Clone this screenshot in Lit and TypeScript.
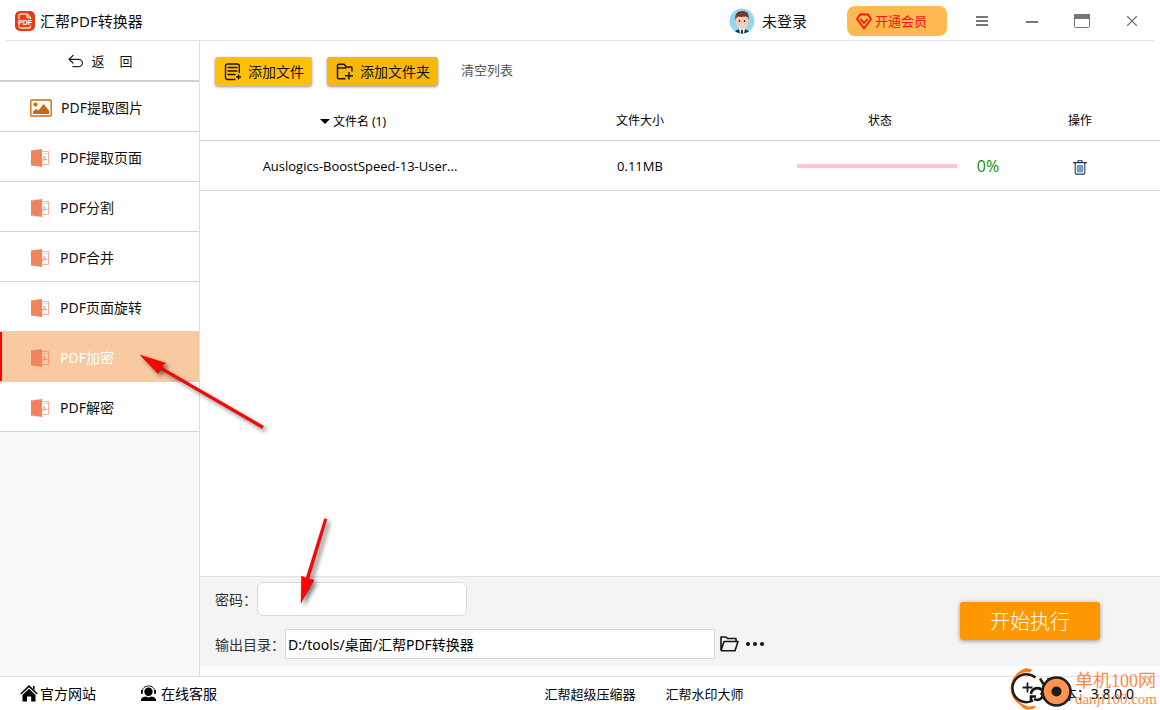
import { LitElement, html, css, svg } from "lit";
import { customElement, state } from "lit/decorators.js";
import { classMap } from "lit/directives/class-map.js";

const FEATURES = ["PDF提取图片", "PDF提取页面", "PDF分割", "PDF合并", "PDF页面旋转", "PDF加密", "PDF解密"];

const logo = html`<svg width="20" height="20" viewBox="0 0 20 20" aria-hidden="true">
  <rect width="20" height="20" rx="5" fill="#e63c10" />
  <path d="M4 8V4.500A1.500 1.500 0 0 1 5.500 3H12L15.500 6.500V8M12 3V6.500H15.500M4 14v1.500A1.500 1.500 0 0 0 5.500 17h8.500a1.500 1.500 0 0 0 1.500-1.500V14" fill="none" stroke="#ffd9c8" stroke-width="1.300" />
  <path d="M2.500 8h15v6.500h-15z" fill="#f04a1c" />
  <text x="10" y="13.800" text-anchor="middle" font-size="7" font-weight="700" fill="#fff" font-family="Liberation Sans, sans-serif">PDF</text>
</svg>`;

const avatar = html`<svg width="26" height="26" viewBox="0 0 26 26" aria-hidden="true">
  <defs><clipPath id="face"><circle cx="13" cy="13" r="12.500" /></clipPath></defs>
  <g clip-path="url(#face)">
    <rect width="26" height="26" fill="#8fd8fb" />
    <path d="M5 26c.5-3.500 2.500-4.500 8-5 5.500.5 7.500 1.500 8 5z" fill="#17324f" />
    <path d="M10 20h6l-1 6h-4z" fill="#fff" />
    <path d="M12.300 21.500h1.400l.6 4.500h-2.600z" fill="#17324f" />
    <circle cx="6.700" cy="13.500" r="1.600" fill="#f4b795" />
    <circle cx="19.300" cy="13.500" r="1.600" fill="#f4b795" />
    <path d="M7 9c0-4 12-4 12 0v5c0 4-3 6.500-6 6.500S7 18 7 14z" fill="#fcceb0" />
    <path d="M6.500 12C5.500 6 8 3 13.500 3 19 3 20.500 7 19.500 12 19 9.500 18 8.500 16.500 8.500c-2.500.5-6 .5-7.500 0C7.500 9.500 7 10.500 6.500 12z" fill="#6d3b2c" />
    <circle cx="10.400" cy="13" r=".9" fill="#4a2b22" />
    <circle cx="15.600" cy="13" r=".9" fill="#4a2b22" />
    <path d="M10.300 16.200h5.400c-.6 2.200-4.800 2.200-5.400 0z" fill="#fff" stroke="#d98a6c" stroke-width=".4" />
  </g>
</svg>`;

const diamond = html`<svg width="16" height="17" viewBox="0 0 16 17" fill="none" stroke="#ff1010" stroke-width="1.800" stroke-linejoin="round" aria-hidden="true">
  <path d="M4 1.500h8l3 4.500-7 9.500L1 6z" /><path d="M4.800 6.500 8 10l3.200-3.500" stroke-linecap="round" />
</svg>`;

const backArrow = html`<svg width="16" height="14" viewBox="0 0 16 14" fill="none" stroke="#222" stroke-width="1.200" aria-hidden="true">
  <path d="M5.500 1 1 5.300l4.500 4.200M1.200 5.300H10.500a4 3.700 0 0 1 0 7.400H4.500" />
</svg>`;

const picture = html`<svg width="22" height="18" viewBox="0 0 22 18" aria-hidden="true">
  <rect x=".8" y="1" width="20.400" height="16" rx="1" fill="#fffaf0" stroke="#c96f1c" stroke-width="1.400" />
  <circle cx="5.500" cy="5.500" r="2" fill="#c26a18" />
  <path d="M3 15v-2.500l3-2.500 2.500 1.500L13.500 5l5.500 6.500V15z" fill="#c26a18" />
</svg>`;

const pdfDoc = html`<svg width="19" height="18" viewBox="0 0 19 18" aria-hidden="true">
  <path d="M10 2.500h7.500v13H10" fill="none" stroke="#f5633f" stroke-opacity=".5" />
  <path d="M11 4.500h6" stroke="#f5633f" stroke-opacity=".25" />
  <path d="M11 11.500c1.500-.8 2.300-2.300 2-4.300.3 2 1.300 3.300 2.800 3.500-1.800-.3-3.300-.1-4.800.8z" fill="none" stroke="#f5633f" stroke-opacity=".65" stroke-width=".9" />
  <path d="M0 1.500 11 0v18L0 16.500z" fill="#f3825d" />
</svg>`;

const addFile = html`<svg width="18" height="18" viewBox="0 0 18 18" fill="none" stroke="#1c1600" stroke-width="1.400" aria-hidden="true">
  <path d="M15.300 10V3a2 2 0 0 0-2-2H3.500a2 2 0 0 0-2 2v11.500a2 2 0 0 0 2 2h8M3.500 4.500h10M3.500 8h10M3.500 11.500h8M14.500 11.500v5M12 14h5" />
</svg>`;

const addFolder = html`<svg width="18" height="18" viewBox="0 0 18 18" fill="none" stroke="#1c1600" stroke-width="1.500" aria-hidden="true">
  <path d="M9.500 15.800H2.800a1.300 1.300 0 0 1-1.300-1.300v-12A1.300 1.300 0 0 1 2.800 1.300H8L10.500 4h4a1.500 1.500 0 0 1 1.500 1.500V8.500M1.500 5h9M13 9v7.500M9 12.800H17" />
</svg>`;

const trash = html`<svg width="14" height="15" viewBox="0 0 14 15" fill="none" aria-hidden="true">
  <rect x="4" y="5" width="6" height="7.500" fill="#8cc4f2" />
  <path d="M0 2.600h14M5 2.300V.8h4v1.500M2.200 2.600V13.200a.9.900 0 0 0 .9.900h7.800a.9.900 0 0 0 .9-.9V2.600" stroke="#2e3450" stroke-width="1.100" />
  <path d="M4.800 5v7M7 5v7M9.200 5v7" stroke="#3a78b8" />
</svg>`;

const openFolder = html`<svg width="19" height="16" viewBox="0 0 19 16" fill="none" stroke="#161616" stroke-width="1.600" stroke-linejoin="round" aria-hidden="true">
  <path d="M1 14.800V1h5L7.500 2.500H16v3M1 14.800h14L18 5.500H4L1 14.800" />
</svg>`;

const house = html`<svg width="18" height="17" viewBox="0 0 18 17" aria-hidden="true">
  <path d="M.8 9 9 1.200 17.200 9M13.800 1v3.500" fill="none" stroke="#000" stroke-width="1.600" />
  <path d="M9 3.800 15.500 10v6.500h-4.300V11.500H7v5H2.500V10z" />
</svg>`;

const agent = html`<svg width="17" height="17" viewBox="0 0 17 17" aria-hidden="true">
  <circle cx="8.500" cy="6.800" r="4.200" />
  <path d="M2.200 7C1.800-1 15.200-1 14.800 7" fill="none" stroke="#000" stroke-width=".9" />
  <path d="M1 5h1.800v4H2a1 1 0 0 1-1-1zM16 5h-1.800v4H15a1 1 0 0 0 1-1zM.8 16c0-3 2-4 4.700-4.500L8.500 12.500l3-1c2.700.5 4.700 1.500 4.700 4.500z" />
</svg>`;

const stamp = html`<svg width="64" height="44" viewBox="0 0 64 44" aria-hidden="true">
  <path d="M22 3.500C12 2 2.500 10 2.500 21c0 9 6 16.500 16 19" fill="none" stroke="#ff7a1c" stroke-width="1.800" />
  <path d="M5 10C9 4 14 2.500 17 1l6 1.500-2 3C15 4.500 9 6 5 10zM10 36.500c5 3.500 9 4 17 2l-2 3c-6 2.500-11 1-15-5z" fill="#ff7a1c" />
  <path d="M26.500 10.500A14 14 0 1 0 24 33.500" fill="none" stroke="#201c1c" stroke-width="2.500" />
  <path d="M18.500 15.500v10M13.500 20.500h10" stroke="#201c1c" stroke-width="1.800" />
  <path d="M22 27a6.500 6.500 0 0 1 11-4M22 34.500v-5h5M34 28a6 6 0 0 1-9 4" fill="none" stroke="#111" stroke-width="2.600" />
  <path d="M31 11.500 37 21M40 11 32 28" stroke="#201c1c" stroke-width="2.500" />
  <circle cx="47.500" cy="24.500" r="14" fill="#ff9350" stroke="#201c1c" stroke-width="2.600" />
  <circle cx="47.500" cy="24.500" r="5" fill="#201c1c" />
</svg>`;

@customElement("pointer-arrow")
class PointerArrow extends LitElement {
  static properties = { shape: { type: String } };
  declare shape: string;
  static styles = css`
    :host { display: block; pointer-events: none; }
    svg { display: block; overflow: visible; filter: drop-shadow(3px 3px 2px rgba(0, 0, 0, 0.5)); }
  `;
  render() {
    const long = this.shape === "long";
    return html`<svg width=${long ? 126 : 28} height=${long ? 76 : 86} fill="#fd0404" stroke="#b00" stroke-width=".4" aria-hidden="true">
      ${long
        ? svg`<path d="M0 0 25.500 8 21.500 12 123.500 71 122 73.500 20.500 14.500 18 18.500z" />`
        : svg`<path d="M1 85 1.500 58 6 60 24.500.5 27 1.500 9 61 14 62z" />`}
    </svg>`;
  }
}

@customElement("app-root")
export class AppRoot extends LitElement {
  @state() private active = 5;

  static styles = css`
    :host {
      display: grid;
      grid-template-rows: auto 1fr auto;
      position: relative;
      height: 100vh;
      overflow: hidden;
      background: #fff;
      color: #111;
      font: 14px/20px "Noto Sans", "Noto Sans CJK SC", sans-serif;
    }
    * { box-sizing: border-box; }
    button, input { font: inherit; color: inherit; }
    button { padding: 0; border: 0; background: none; cursor: pointer; }
    a { color: inherit; text-decoration: none; }
    svg { display: block; flex: none; }

    .titlebar {
      display: flex;
      align-items: center;
      height: 41px;
      margin: 0 6px;
      padding: 2px 0 0 9px;
      border-bottom: 1px solid #e2e2e2;
      font-size: 15px;
    }
    .brand, .account { display: flex; align-items: center; gap: 5px; }
    .brand { flex: 1; }
    .account { gap: 7px; margin-right: 40px; }
    .vip {
      display: flex;
      align-items: center;
      gap: 3px;
      height: 30px;
      padding: 0 20px 0 9px;
      margin-right: 10px;
      border-radius: 8px;
      background: #ffb950;
      color: #ff1010;
      font-size: 13px;
    }
    .window { display: grid; place-items: center; width: 50px; height: 38px; }
    .window:last-child { margin-right: -3px; }

    .body { display: grid; grid-template-columns: 200px 1fr; min-height: 0; }
    .side { display: flex; flex-direction: column; background: #f9f9f9; border-right: 1px solid #dedede; }
    .back {
      display: flex;
      align-items: center;
      justify-content: center;
      gap: 7px;
      height: 41px;
      padding-left: 2px;
      border-bottom: 2px solid #d2d2d2;
      background: #fff;
      font-size: 13px;
    }
    .back span { margin-left: 8px; }
    .item {
      display: flex;
      align-items: center;
      gap: 10px;
      position: relative;
      height: 50px;
      padding: 2px 0 0 31px;
      border-bottom: 1px solid #d2d2d2;
      background: #fff;
    }
    .item.wide { padding-left: 30px; gap: 9px; }
    .item.active { background: #f7caa1; color: #fff; box-shadow: inset 2px 0 #f00; }
    .hint { position: absolute; z-index: 2; left: 140px; top: 23px; }

    .main { display: flex; flex-direction: column; min-width: 0; }
    .tools { display: flex; align-items: center; gap: 15px; padding: 16px 15px 14px; }
    .add {
      display: flex;
      align-items: center;
      gap: 6px;
      height: 29px;
      padding: 0 8px 0 9px;
      border-radius: 3px;
      background: #ffc107;
      box-shadow: 0 1px 3px rgba(0, 0, 0, 0.4);
    }
    .add.folder { background: #f5b80b; }
    .clear { margin-left: 8px; padding-bottom: 3px; color: #555; font-size: 13px; }

    .files { width: 100%; border-collapse: collapse; table-layout: fixed; font-size: 12px; }
    .files th, .files td { padding: 2px 0 0; border-bottom: 1px solid #d2d2d2; text-align: center; font-weight: 400; color: #000; }
    .files th { height: 40px; }
    .files td { height: 50px; font-family: "Open Sans", "Noto Sans CJK SC", sans-serif; font-size: 13px; }
    .name { width: 33.33%; }
    .mid { width: 25%; }
    .sort { display: inline-flex; align-items: center; gap: 3px; margin-right: 14px; }
    .caret { border: 5px solid transparent; border-top: 5px solid #000; border-bottom: 0; }
    .state { display: flex; align-items: center; justify-content: center; gap: 20px; color: #0a8f0a; font-size: 16px; padding-left: 36px; }
    .bar { width: 160px; height: 4px; background: #f9c6d7; }
    .del { display: inline-block; vertical-align: middle; }

    .options {
      display: flex;
      align-items: center;
      justify-content: space-between;
      margin: auto 0 10px;
      padding: 5px 60px 7px 15px;
      border-top: 1px solid #e0e0e0;
      background: #f4f4f4;
      color: #333;
    }
    .fields { display: grid; gap: 13px; }
    .field { display: flex; align-items: center; position: relative; }
    .field label { padding-top: 2px; }
    .pass, .path { border: 1px solid #dcdcdc; background: #fff; color: #000; outline: 0; }
    .pass { width: 210px; height: 34px; border-radius: 6px; }
    .path { width: 430px; height: 30px; padding: 0 2px; margin-right: 5px; }
    .more { display: flex; gap: 3px; margin-left: 7px; }
    .more i { width: 4px; height: 4px; border-radius: 50%; background: #111; }
    .hint.short { left: 85px; top: -64px; }
    .run {
      width: 140px;
      height: 38px;
      padding-top: 2px;
      border-radius: 3px;
      background: #ff9800;
      box-shadow: 0 1px 4px rgba(0, 0, 0, 0.4);
      color: #fff;
      font-size: 20px;
      font-weight: 300;
    }

    .foot {
      display: flex;
      align-items: center;
      height: 34px;
      padding: 0 26px 0 20px;
      border-top: 1px solid #e0e0e0;
      color: #000;
    }
    .links, .version { flex: 1; }
    .links { display: flex; gap: 44px; }
    .links a { display: flex; align-items: center; gap: 2px; }
    .promo { display: flex; gap: 30px; margin-left: 134px; font-size: 13px; }
    .links a + a { gap: 4px; }
    .version { text-align: right; }
    .mark {
      display: flex;
      align-items: center;
      gap: 2px;
      position: absolute;
      right: 3px;
      bottom: -1px;
      color: #ff8a48;
      font-family: "Liberation Serif", "Noto Sans CJK SC", serif;
      pointer-events: none;
    }
    .mark b { display: block; font-weight: 400; font-size: 18px; line-height: 20px; }
    .mark small { display: block; font-size: 15px; line-height: 16px; }
  `;

  render() {
    return html`
      <header class="titlebar">
        <div class="brand">${logo}<span>汇帮PDF转换器</span></div>
        <a class="account" href="#">${avatar}<span>未登录</span></a>
        <button class="vip">${diamond}开通会员</button>
        <button class="window" aria-label="菜单"><svg width="12" height="12" stroke="#777" stroke-width="2"><path d="M0 2h12M0 6h12M0 10h12" /></svg></button>
        <button class="window" aria-label="最小化"><svg width="12" height="12" stroke="#777" stroke-width="2"><path d="M0 7h12" /></svg></button>
        <button class="window" aria-label="最大化"><svg width="16" height="14" fill="none" stroke="#777"><rect x=".5" y=".5" width="15" height="13" rx="1" /><path d="M0 2.500h16" stroke-width="5" /></svg></button>
        <button class="window" aria-label="关闭"><svg width="10" height="10" stroke="#777" stroke-width="1.300"><path d="M0 0 10 10M10 0 0 10" /></svg></button>
      </header>
      <div class="body">
        <nav class="side">
          <button class="back">${backArrow}返<span>回</span></button>
          ${FEATURES.map((label, i) => html`
            <a href="#" class=${classMap({ item: true, wide: i === 0, active: i === this.active })}
              @click=${(e: Event) => { e.preventDefault(); this.active = i; }}>
              ${i === 0 ? picture : pdfDoc}<span>${label}</span>
              ${i === 5 ? html`<pointer-arrow class="hint" shape="long"></pointer-arrow>` : null}
            </a>`)}
        </nav>
        <main class="main">
          <div class="tools">
            <button class="add">${addFile}添加文件</button>
            <button class="add folder">${addFolder}添加文件夹</button>
            <button class="clear">清空列表</button>
          </div>
          <table class="files">
            <thead>
              <tr>
                <th class="name"><span class="sort"><i class="caret"></i>文件名 (1)</span></th>
                <th class="mid">文件大小</th>
                <th class="mid">状态</th>
                <th>操作</th>
              </tr>
            </thead>
            <tbody>
              <tr>
                <td>Auslogics-BoostSpeed-13-User...</td>
                <td>0.11MB</td>
                <td><div class="state"><div class="bar"></div>0%</div></td>
                <td><button class="del" aria-label="删除">${trash}</button></td>
              </tr>
            </tbody>
          </table>
          <section class="options">
            <div class="fields">
              <div class="field">
                <label for="pass">密码：</label><input id="pass" class="pass" type="text" />
                <pointer-arrow class="hint short" shape="short"></pointer-arrow>
              </div>
              <div class="field">
                <label for="path">输出目录：</label><input id="path" class="path" type="text" value="D:/tools/桌面/汇帮PDF转换器" />
                <button aria-label="打开目录">${openFolder}</button>
                <button class="more" aria-label="更多"><i></i><i></i><i></i></button>
              </div>
            </div>
            <button class="run">开始执行</button>
          </section>
        </main>
      </div>
      <footer class="foot">
        <div class="links"><a href="#">${house}官方网站</a><a href="#">${agent}<span>在线客服</span></a></div>
        <div class="promo"><a href="#">汇帮超级压缩器</a><a href="#">汇帮水印大师</a></div>
        <div class="version">版本：3.8.0.0</div>
      </footer>
      <div class="mark">${stamp}<div><b>单机100网</b><small>danji100.com</small></div></div>
    `;
  }
}
